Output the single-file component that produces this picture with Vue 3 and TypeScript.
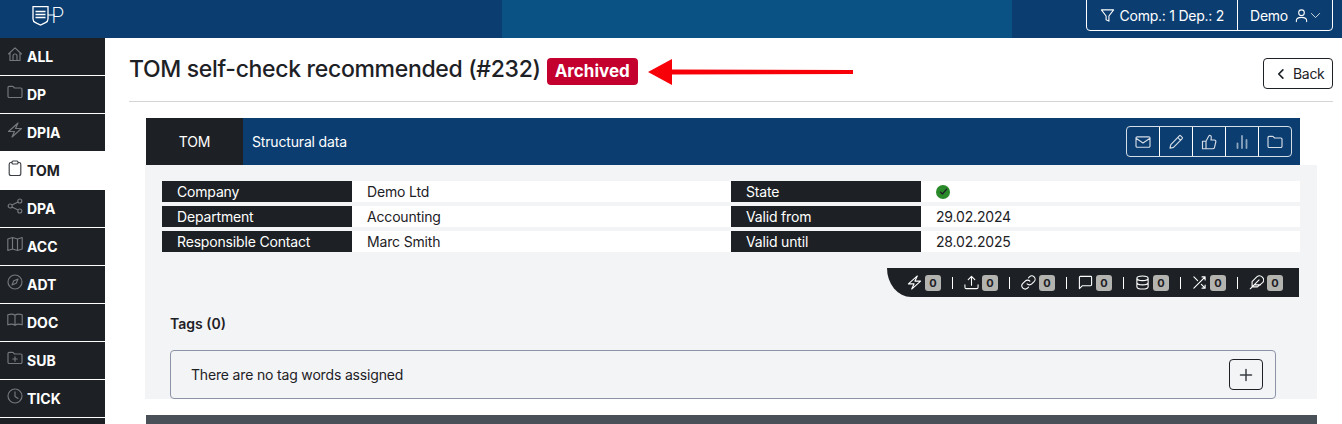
<template>
  <div class="page">
    <header class="topbar">
      <div class="logo">
        <svg width="24" height="22" viewBox="0 0 24 22" fill="none" stroke="#fff" stroke-width="1.300">
          <path d="M1 .7h15v12.300c0 2-1 3-2.500 3.700l-5 2.300-5-2.300C2 16 1 15 1 13z" />
          <path d="M3.500 5.500h10M3.500 8.500h10M3.500 11.500h10" />
          <path d="M16 9h7" stroke-width="1" />
        </svg>
        <span class="logo-p">P</span>
      </div>
      <div class="topbar-mid"></div>
      <div class="topbar-actions">
        <div class="top-btn">
          <svg class="line" width="15" height="15" viewBox="0 0 16 16"><path :d="icons.filter" /></svg>
          <span>Comp.: 1 Dep.: 2</span>
        </div>
        <div class="top-btn user">
          <span>Demo</span>
          <svg class="line" width="15" height="15" viewBox="0 0 16 16"><path :d="icons.person" /></svg>
          <svg class="line" width="11" height="11" viewBox="0 0 16 16"><path :d="icons.chevronDown" /></svg>
        </div>
      </div>
    </header>

    <div class="body">
      <nav class="sidebar">
        <a v-for="item in navItems" :key="item.label" class="nav-item" :class="{ active: item.label === 'TOM' }">
          <svg class="line nav-ico" width="16" height="16" viewBox="0 0 16 16"><path :d="item.icon" /></svg>
          <span>{{ item.label }}</span>
        </a>
        <div class="nav-rest"></div>
      </nav>

      <main class="content">
        <div class="title-row">
          <h1>TOM self-check recommended (#232)</h1>
          <span class="badge">Archived</span>
          <button class="back-btn">
            <svg class="line thick" width="12" height="12" viewBox="0 0 16 16"><path d="M10.500 2.500 5 8l5.500 5.500" /></svg>
            Back
          </button>
        </div>
        <hr class="divider" />

        <section class="panel">
          <div class="panel-head">
            <div class="panel-tab">TOM</div>
            <div class="panel-name">Structural data</div>
            <div class="head-actions">
              <div v-for="btn in headButtons" :key="btn.name" class="head-btn" :class="{ dim: btn.name === 'chart' }">
                <svg class="line" width="16" height="16" viewBox="0 0 16 16"><path :d="btn.icon" /></svg>
              </div>
            </div>
          </div>

          <div class="panel-body">
            <div class="facts">
              <template v-for="row in facts" :key="row.label">
                <div class="fact-label">{{ row.label }}</div>
                <div class="fact-value">
                  <span v-if="row.check" class="state-ok">
                    <svg class="line thick" width="9" height="9" viewBox="0 0 16 16"><path d="M2.500 9l3.500 3.500 7.500-8.500" /></svg>
                  </span>
                  <template v-else>{{ row.value }}</template>
                </div>
              </template>
            </div>

            <div class="stats-row">
              <div class="stats">
                <template v-for="(stat, i) in stats" :key="i">
                  <span v-if="i > 0" class="sep"></span>
                  <svg class="line" width="15" height="15" viewBox="0 0 16 16"><path :d="stat" /></svg>
                  <span class="count">0</span>
                </template>
              </div>
            </div>

            <div class="tags-title">Tags (0)</div>
            <div class="tags-box">
              <span>There are no tag words assigned</span>
              <button class="add-btn">
                <svg class="line" width="16" height="16" viewBox="0 0 16 16"><path d="M8 2.500v11M2.500 8h11" /></svg>
              </button>
            </div>
          </div>

          <div class="next-head"></div>
        </section>
      </main>
    </div>

    <svg class="arrow" width="206" height="26" viewBox="0 0 206 26">
      <path d="M1 13 25 0v10.500L206 11v4l-181 .500V26z" fill="#f70008" />
    </svg>
  </div>
</template>

<script setup lang="ts">
interface NavItem {
  label: string
  icon: string
}

interface Fact {
  label: string
  value: string
  check?: boolean
}

// all icons are stroked on a 16 unit box
const icons = {
  filter: 'M1.500 2h13l-5 6.500V14l-3-1.500v-4z',
  person: 'M8 2a3 3 0 1 1 0 6 3 3 0 0 1 0-6zM2.500 14.500v-1c0-2 2-3.500 5.500-3.500s5.500 1.500 5.500 3.500v1',
  chevronDown: 'M2 5l6 6 6-6',
  folder: 'M1 3.500a1.200 1.200 0 0 1 1.200-1.200h3.300a1 1 0 0 1 .8.400L7.500 4h6.300A1.200 1.200 0 0 1 15 5.200v7.100a1.200 1.200 0 0 1-1.200 1.200H2.200A1.200 1.200 0 0 1 1 12.300z',
  bolt: 'M11 1 1.500 9.500h6L5 15l9.500-8.500h-6z',
  house: 'M1.500 8 8 1.800 14.500 8M3 6.800V14.500h10V6.800M6 14.500V10a2 2 0 0 1 4 0v4.500',
  clipboard: 'M5 2.500H4A1.800 1.800 0 0 0 2.200 4.300v9.400A1.800 1.800 0 0 0 4 15.500h8a1.800 1.800 0 0 0 1.800-1.800V4.300A1.800 1.800 0 0 0 12 2.500h-1M6 1h4a1 1 0 0 1 1 1v1a1 1 0 0 1-1 1H6a1 1 0 0 1-1-1V2a1 1 0 0 1 1-1z',
  share: 'M12.800 1a2 2 0 1 1 0 4 2 2 0 0 1 0-4zM3.200 6a2 2 0 1 1 0 4 2 2 0 0 1 0-4zM12.800 11a2 2 0 1 1 0 4 2 2 0 0 1 0-4zM5 7l6-3M5 9l6 3',
  map: 'M.8 3 5.500 1.500l5 1.500 4.700-1.500V13l-4.700 1.500-5-1.500L.8 14.500zM5.500 1.500V13M10.500 3v11.500',
  compass: 'M8 1a7 7 0 1 1 0 14A7 7 0 0 1 8 1zM11 5 9.200 9.200 5 11l1.800-4.200z',
  book: 'M.8 2.800C3 2 6.500 2 8 3.300 9.500 2 13 2 15.200 2.800v10C13 12 9.500 12 8 13.300 6.500 12 3 12 .8 12.800zM8 3.300v10',
  folderPlus: 'M1 3.500a1.200 1.200 0 0 1 1.200-1.200h3.300a1 1 0 0 1 .8.400L7.500 4h6.300A1.200 1.200 0 0 1 15 5.200v7.100a1.200 1.200 0 0 1-1.200 1.200H2.200A1.200 1.200 0 0 1 1 12.300zM8 6.800v4.400M5.800 9h4.400',
  clock: 'M8 1a7 7 0 1 1 0 14A7 7 0 0 1 8 1zM8 3.800V8.500l3 2',
  mail: 'M2.200 2.800h11.600a1.200 1.200 0 0 1 1.200 1.200v8a1.200 1.200 0 0 1-1.200 1.200H2.200A1.200 1.200 0 0 1 1 12V4a1.200 1.200 0 0 1 1.200-1.200zM1 4.300 8 9l7-4.700',
  pencil: 'M11.300 1.800a1 1 0 0 1 1.400 0l1.500 1.500a1 1 0 0 1 0 1.400L5.500 13.400l-3.500 .8.800-3.500zM9.700 3.400l2.900 2.900',
  thumb: 'M5 7.200 7.800 2c.5-1 2.700-.8 2.500 1.200L10 6h3.300c1.200 0 1.800 1 1.500 2l-1.300 5.300c-.2 1-1 1.400-1.800 1.400H5zM1.500 7.200H5v7.500H1.500z',
  bars: 'M3.500 9.500V14M8 2v12M12.500 6v8',
  upload: 'M1 10.500V13a1.500 1.500 0 0 0 1.500 1.500h11A1.500 1.500 0 0 0 15 13v-2.500M8 11V1.500M4.500 5 8 1.500 11.500 5',
  link: 'M6.500 9.500a3.500 3.500 0 0 0 5 0L14 7a3.500 3.500 0 0 0-5-5L8 3M9.500 6.500a3.500 3.500 0 0 0-5 0L2 9a3.500 3.500 0 0 0 5 5l1-1',
  chat: 'M1.500 14.500v-12a1 1 0 0 1 1-1h11a1 1 0 0 1 1 1v8a1 1 0 0 1-1 1H4.500z',
  database: 'M2 3.500C2 2.100 4.700 1 8 1s6 1.100 6 2.500S11.300 6 8 6 2 4.900 2 3.500zM2 3.500v9C2 13.900 4.700 15 8 15s6-1.100 6-2.500v-9M2 8c0 1.400 2.700 2.500 6 2.500s6-1.100 6-2.500',
  shuffle: 'M10.700 2H14v3.300M2 14 14 2M14 10.700V14h-3.300M10 10l4 4M2 2l4 4',
  feather: 'M14.500 8.200a4.400 4.400 0 0 0-6.200-6.200L3.300 7v5.700H9zM10.700 5.300 1.300 14.700M12.200 10.500H6'
}

const navItems: NavItem[] = [
  { label: 'ALL', icon: icons.house },
  { label: 'DP', icon: icons.folder },
  { label: 'DPIA', icon: icons.bolt },
  { label: 'TOM', icon: icons.clipboard },
  { label: 'DPA', icon: icons.share },
  { label: 'ACC', icon: icons.map },
  { label: 'ADT', icon: icons.compass },
  { label: 'DOC', icon: icons.book },
  { label: 'SUB', icon: icons.folderPlus },
  { label: 'TICK', icon: icons.clock }
]

const headButtons = [
  { name: 'mail', icon: icons.mail },
  { name: 'edit', icon: icons.pencil },
  { name: 'like', icon: icons.thumb },
  { name: 'chart', icon: icons.bars },
  { name: 'folder', icon: icons.folder }
]

const stats: string[] = [icons.bolt, icons.upload, icons.link, icons.chat, icons.database, icons.shuffle, icons.feather]

const facts: Fact[] = [
  { label: 'Company', value: 'Demo Ltd' },
  { label: 'State', value: '', check: true },
  { label: 'Department', value: 'Accounting' },
  { label: 'Valid from', value: '29.02.2024' },
  { label: 'Responsible Contact', value: 'Marc Smith' },
  { label: 'Valid until', value: '28.02.2025' }
]
</script>

<style>
html, body {
  margin: 0;
  background: #fff;
  overflow: hidden;
}
</style>

<style scoped>
.page {
  position: relative;
  width: 1342px;
  height: 424px;
  overflow: hidden;
  font-family: Inter, "Liberation Sans", sans-serif;
  font-size: 14px;
  letter-spacing: -0.17px;
  color: #1d2125;
}

.line {
  fill: none;
  stroke: currentColor;
  stroke-width: 1.15;
  stroke-linejoin: round;
  stroke-linecap: round;
  flex: none;
}

.line.thick {
  stroke-width: 2.2;
}

.topbar {
  display: flex;
  height: 38px;
  background: #0b3d70;
}

.logo {
  display: flex;
  align-items: flex-start;
  width: 105px;
  padding: 6px 0 0 32px;
  box-sizing: border-box;
  color: #fff;
}

.logo-p {
  margin-left: -5px;
  margin-top: -2px;
  font-size: 22px;
  font-weight: 200;
  line-height: 22px;
}

.topbar-mid {
  width: 510px;
  margin-left: 397px;
  background: #0a5284;
}

.topbar-actions {
  display: flex;
  margin-left: auto;
  margin-right: 9px;
  height: 32px;
  margin-top: -1px;
  border: 1px solid #fff;
  border-radius: 0 0 4px 4px;
  box-sizing: border-box;
  color: #fff;
}

.top-btn {
  display: flex;
  align-items: center;
  gap: 5px;
  padding: 0 13px;
  letter-spacing: -0.25px;
}

.top-btn.user {
  border-left: 1px solid #fff;
  padding: 0 11px 0 12px;
}

.top-btn.user span + .line {
  margin-left: 1px;
}

.top-btn.user .line + .line {
  margin-left: -4px;
}

.body {
  display: flex;
}

.sidebar {
  width: 105px;
  flex: none;
  display: flex;
  flex-direction: column;
}

.nav-item {
  display: flex;
  align-items: flex-start;
  height: 37px;
  margin-bottom: 1px;
  box-sizing: border-box;
  padding: 10px 0 0 7px;
  gap: 4px;
  background: #1d2125;
  color: #fff;
  font-weight: 700;
  line-height: 18px;
  letter-spacing: 0;
}

.nav-ico {
  color: #75797e;
  margin-top: -2px;
}

.nav-item.active {
  background: #fff;
  color: #1d2125;
  margin-top: -1px;
  height: 39px;
  padding-top: 11px;
  margin-bottom: 0;
}

.nav-item.active .nav-ico {
  color: #3b3f44;
}

.nav-rest {
  height: 10px;
  background: #1d2125;
}

.content {
  flex: 1;
  padding: 20px 9px 0 24px;
  min-width: 0;
}

.title-row {
  display: flex;
  align-items: flex-start;
  height: 43px;
}

h1 {
  margin: 0;
  font-size: 23px;
  font-weight: 500;
  line-height: 22px;
  letter-spacing: -0.32px;
  white-space: nowrap;
}

.badge {
  margin-left: 6px;
  height: 27px;
  width: 91px;
  background: #c4002f;
  color: #fff;
  border-radius: 4px;
  font-weight: 700;
  font-size: 17px;
  line-height: 27px;
  letter-spacing: 0;
  text-align: center;
}

.back-btn {
  margin-left: auto;
  display: flex;
  align-items: center;
  gap: 6px;
  height: 31px;
  width: 70px;
  padding: 0 0 0 11px;
  box-sizing: border-box;
  background: #fff;
  border: 1px solid #1d2125;
  border-radius: 4px;
  color: #1d2125;
  font-family: inherit;
  font-size: 14px;
  letter-spacing: -0.3px;
}

.divider {
  margin: 0;
  border: 0;
  border-top: 1px solid #d4d4d4;
}

.panel {
  margin: 16px 16px 0 16px;
}

.panel-head {
  display: flex;
  align-items: center;
  height: 47px;
  margin: 0 17px 0 1px;
  background: #0b3d70;
  color: #fff;
}

.panel-tab {
  width: 97px;
  height: 100%;
  background: #1d2125;
  display: flex;
  align-items: center;
  justify-content: center;
}

.panel-name {
  margin-left: 9px;
}

.head-actions {
  display: flex;
  margin-left: auto;
  margin-right: 8px;
  height: 31px;
  border: 1px solid #d5dde6;
  border-radius: 4px;
  box-sizing: border-box;
}

.head-btn {
  width: 33px;
  display: flex;
  align-items: center;
  justify-content: center;
  color: #d5dde6;
  border-left: 1px solid #fff;
  box-sizing: border-box;
}

.head-btn:first-child {
  border-left: 0;
  width: 32px;
}

.head-btn.dim {
  color: #8fa6bf;
}

.head-btn.dim .line {
  stroke-width: 1.8;
}

.panel-body {
  background: #f3f4f6;
  padding: 16px 17px 0 17px;
  height: 234px;
  box-sizing: border-box;
}

.facts {
  display: grid;
  grid-template-columns: 190px 379px 190px 379px;
  row-gap: 4px;
  width: 1138px;
}

.fact-label {
  height: 21px;
  background: #1d2125;
  color: #fff;
  padding-left: 15px;
  line-height: 21px;
}

.fact-value {
  height: 21px;
  background: #fff;
  padding-left: 15px;
  line-height: 21px;
  display: flex;
  align-items: center;
}

.state-ok {
  width: 14px;
  height: 14px;
  border-radius: 50%;
  background: #2a8a2a;
  color: #1d2125;
  display: flex;
  align-items: center;
  justify-content: center;
}

.stats-row {
  display: flex;
  justify-content: flex-end;
  width: 1137px;
  margin-top: 16px;
}

.stats {
  display: flex;
  align-items: center;
  gap: 3px;
  height: 29px;
  padding: 0 16px 0 20px;
  background: #1d2125;
  color: #fff;
  border-bottom-left-radius: 24px 29px;
  box-sizing: border-box;
}

.count {
  width: 16px;
  height: 16px;
  border-radius: 3px;
  background: #b3b3b0;
  color: #1d2125;
  font-size: 11px;
  font-weight: 700;
  letter-spacing: 0;
  text-align: center;
  line-height: 16px;
}

.sep {
  width: 1px;
  height: 12px;
  background: #fff;
  margin: 0 8px;
}

.tags-title {
  margin: 18px 0 0 8px;
  font-weight: 600;
  line-height: 17px;
  letter-spacing: 0;
}

.tags-box {
  display: flex;
  align-items: center;
  justify-content: space-between;
  width: 1106px;
  height: 49px;
  margin: 18px 0 0 8px;
  padding: 0 12px 0 20px;
  box-sizing: border-box;
  border: 1px solid #8c93a6;
  border-radius: 4px;
}

.add-btn {
  width: 34px;
  height: 31px;
  padding: 0;
  display: flex;
  align-items: center;
  justify-content: center;
  background: transparent;
  border: 1px solid #1d2125;
  border-radius: 4px;
  color: #3b3f44;
}

.add-btn .line {
  stroke-width: 1.5;
}

.next-head {
  height: 30px;
  margin: 16px 0 0 1px;
  background: #495057;
}

.arrow {
  position: absolute;
  left: 647px;
  top: 59px;
}
</style>
